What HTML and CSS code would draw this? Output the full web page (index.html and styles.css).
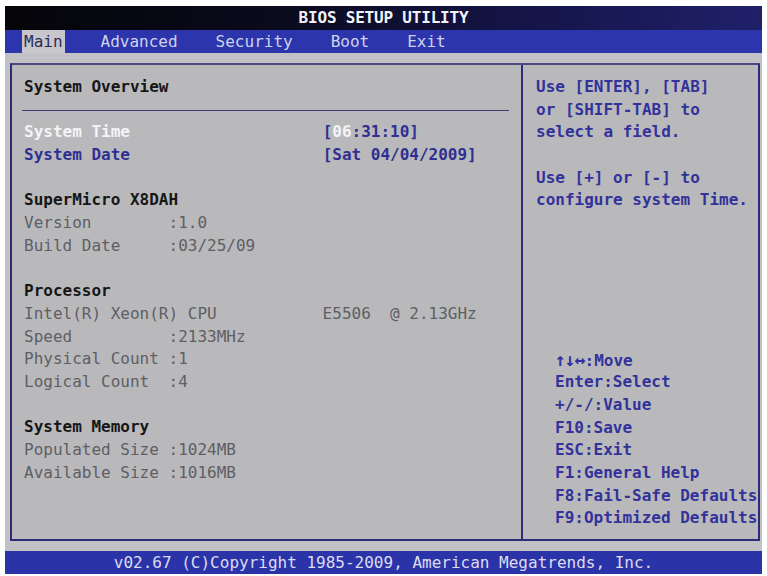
FILE: index.html
```html
<!DOCTYPE html>
<html lang="en">
<head>
<meta charset="utf-8">
<title>BIOS SETUP UTILITY</title>
<link rel="stylesheet" href="styles.css">
</head>
<body>
<div class="screen">
  <header class="title">BIOS SETUP UTILITY</header>
  <nav class="menubar"><span class="tab active">Main</span><span class="tab">Advanced</span><span class="tab">Security</span><span class="tab">Boot</span><span class="tab">Exit</span></nav>
  <div class="desk">
    <main class="panel">
      <section class="info">
        <div class="line head">System Overview</div>
        <div class="rule"></div>
        <div class="line item current">System Time                    <span class="val">[<span class="edit">06</span>:31:10]</span></div>
        <div class="line item">System Date                    <span class="val">[Sat 04/04/2009]</span></div>
        <div class="line"></div>
        <div class="line head">SuperMicro X8DAH</div>
        <div class="line dim">Version        :1.0</div>
        <div class="line dim">Build Date     :03/25/09</div>
        <div class="line"></div>
        <div class="line head">Processor</div>
        <div class="line dim">Intel(R) Xeon(R) CPU           E5506  @ 2.13GHz</div>
        <div class="line dim">Speed          :2133MHz</div>
        <div class="line dim">Physical Count :1</div>
        <div class="line dim">Logical Count  :4</div>
        <div class="line"></div>
        <div class="line head">System Memory</div>
        <div class="line dim">Populated Size :1024MB</div>
        <div class="line dim">Available Size :1016MB</div>
      </section>
      <aside class="side">
        <div class="hint">
          <div class="line">Use [ENTER], [TAB]</div>
          <div class="line">or [SHIFT-TAB] to</div>
          <div class="line">select a field.</div>
          <div class="line"></div>
          <div class="line">Use [+] or [-] to</div>
          <div class="line">configure system Time.</div>
        </div>
        <ul class="keys">
          <li class="line"><span class="arrows">↑↓↔</span>:Move</li>
          <li class="line">Enter:Select</li>
          <li class="line">+/-/:Value</li>
          <li class="line">F10:Save</li>
          <li class="line">ESC:Exit</li>
          <li class="line">F1:General Help</li>
          <li class="line">F8:Fail-Safe Defaults</li>
          <li class="line">F9:Optimized Defaults</li>
        </ul>
      </aside>
    </main>
  </div>
  <footer class="footer">v02.67 (C)Copyright 1985-2009, American Megatrends, Inc.</footer>
</div>
</body>
</html>
```

FILE: styles.css
```css
* {
  box-sizing: border-box;
}

html,
body {
  margin: 0;
  background: #ffffff;
}

body {
  font-family: "DejaVu Sans Mono", "Liberation Mono", monospace;
  font-size: 16px;
}

.screen {
  width: 767px;
  height: 576px;
  padding: 6px 5px 2px 5px;
  display: flex;
  flex-direction: column;
}

/* top title strip */
.title {
  height: 24px;
  line-height: 24px;
  text-align: center;
  font-weight: bold;
  color: #f2f2f8;
  letter-spacing: -0.2px;
  background: linear-gradient(to right, #050509 0%, #0a0a1c 35%, #15154a 70%, #20206a 100%);
}

/* menu tabs */
.menubar {
  height: 23px;
  display: flex;
  align-items: stretch;
  padding-left: 17px;
  background: #2c35ab;
  white-space: pre;
}

.tab {
  line-height: 23px;
  color: #cfd2ec;
  margin-right: 38px;
}

.tab.active {
  padding: 0 2px;
  margin-right: 36px;
  background: #c7c7cb;
  color: #2a2a5a;
}

/* grey area holding the framed panel */
.desk {
  flex: 1;
  padding: 10px 2px 10px 5px;
  background: #c2c2c6;
  display: flex;
}

.panel {
  flex: 1;
  display: flex;
  border: 2px solid #2b2b78;
  border-top-color: #4a4a7e;
  background: #b9b9bc;
}

.line {
  height: 22.7px;
  line-height: 22.7px;
  white-space: pre;
}

/* left column */
.info {
  width: 511px;
  padding: 11px 12px 0 12px;
  border-right: 2px solid #2b2b78;
}

.head {
  color: #161616;
  font-weight: bold;
}

.dim {
  color: #5e5e64;
}

.item {
  color: #2f2f92;
  font-weight: bold;
}

.item.current {
  color: #f4f4f6;
}

.item .val {
  color: #2f2f92;
}

.item .edit {
  color: #f4f4f6;
}

.rule {
  height: 22.7px;
  display: flex;
  align-items: center;
  margin-left: -2px;
}

.rule::after {
  content: "";
  flex: 1;
  height: 1px;
  background: #3c3c7a;
}

/* right help column */
.side {
  flex: 1;
  padding: 11px 0 9px 13px;
  display: flex;
  flex-direction: column;
  color: #32329a;
  font-weight: bold;
}

.keys {
  list-style: none;
  margin: auto 0 0 0;
  padding: 0 0 0 19px;
}

.arrows {
  font-size: 18px;
  letter-spacing: -1px;
}

/* bottom copyright strip */
.footer {
  height: 23px;
  line-height: 23px;
  text-align: center;
  color: #dcdcf0;
  background: #2b33a9;
}
```
